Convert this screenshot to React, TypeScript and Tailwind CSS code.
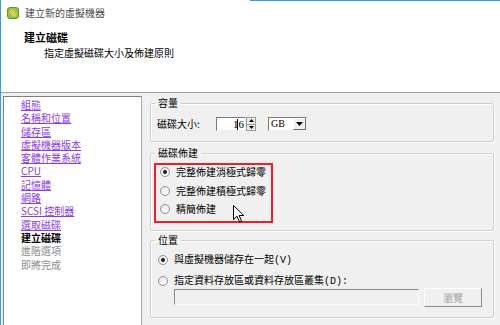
import React from "react";

function Radio({ checked }: { checked?: boolean }) {
  return (
    <span className="w-[10px] h-[10px] rounded-full border border-[#8f9090] bg-[linear-gradient(135deg,#e6e6e6,#ffffff)] flex items-center justify-center shrink-0">
      {checked && <span className="w-[4px] h-[4px] rounded-full bg-[#1c1c1c]" />}
    </span>
  );
}

function Icon() {
  return (
    <svg width="12" height="12" viewBox="0 0 12 12" className="shrink-0">
      <rect x="0.5" y="0.5" width="11" height="11" rx="2.5" fill="#8cc63f" stroke="#5a9a25" />
      <rect x="2.5" y="2.5" width="7" height="7" rx="1.5" fill="#b5dd6a" />
      <path d="M3 8.5 L5.2 6.3 M6.8 5.7 L9 3.5" stroke="#f39a1d" strokeWidth="2.4" strokeLinecap="round" />
      <path d="M4.6 7.2 L7.4 4.8" stroke="#ffffff" strokeWidth="1" strokeLinecap="round" />
    </svg>
  );
}

export default function App() {
  const links = ["組態", "名稱和位置", "儲存區", "虛擬機器版本", "客體作業系統", "CPU", "記憶體", "網路", "SCSI 控制器", "選取磁碟"];
  return (
    <div className="relative w-[500px] h-[325px] overflow-hidden bg-[#f0f0f0] border-l border-[#3d9be3] flex flex-col font-['Noto_Sans_CJK_TC','Noto_Sans',sans-serif] text-[10px] text-black">
      <div className="flex h-px shrink-0">
        <div className="w-[249px] bg-white" />
        <div className="flex-1 bg-[#3d9be3]" />
      </div>
      <div className="bg-white h-[92px] shrink-0 border-b border-[#a0a0a0] flex flex-col">
        <div className="flex items-center h-[14px] mt-[5px] pl-[6px] gap-[6px]">
          <Icon />
          <span className="text-[10px] leading-[14px] text-[#4a4a4a]">建立新的虛擬機器</span>
        </div>
        <div className="mt-[10px] pl-[23px] leading-[14px] text-[11px] font-bold">建立磁碟</div>
        <div className="mt-[2px] pl-[43px] leading-[14px] text-[10px]">指定虛擬磁碟大小及佈建原則</div>
      </div>
      <div className="flex flex-1 pt-[3px] items-start">
        <div className="ml-[2px] w-[139px] h-[240px] shrink-0 bg-white border border-[#a8a8a8] border-t-[#828282] border-l-[#828282] pt-px pl-[17px] flex flex-col">
          {links.map((l) => (
            <div key={l} className="h-[13.3px] leading-[13.3px] text-[#8a3ce0] underline underline-offset-[1px] whitespace-nowrap">
              {l}
            </div>
          ))}
          <div className="h-[13.3px] leading-[13.3px] font-bold">建立磁碟</div>
          <div className="h-[13.3px] leading-[13.3px] text-[#8c8c8c]">進階選項</div>
          <div className="h-[13.3px] leading-[13.3px] text-[#8c8c8c]">即將完成</div>
        </div>
        <div className="ml-[8px] w-[344px] flex flex-col">
          <fieldset className="mt-px border border-[#cfcfcf] rounded-[2px] shadow-[inset_1px_1px_0_#fff,1px_1px_0_#fff] pb-[10px]">
            <legend className="ml-[4px] px-[3px] leading-[12px] text-[10px]">容量</legend>
            <div className="mt-[8px] flex items-center pl-[6px] h-[14px]">
              <span className="w-[59px] leading-[14px]">磁碟大小:</span>
              <div className="w-[30px] h-[14px] bg-white border border-[#f0f0f0] border-t-[#7a7a7a] border-l-[#7a7a7a] flex items-center justify-end pr-px">
                <span className="w-px h-[11px] bg-black -mr-[5px] relative" />
                <span className="leading-[12px] font-['Liberation_Serif',serif] text-[11px]">16</span>
              </div>
              <div className="w-[10px] h-[14px] flex flex-col border border-[#9a9a9a] bg-[#ececec]">
                <div className="flex-1 flex items-center justify-center border-b border-[#9a9a9a]">
                  <svg width="5" height="3" viewBox="0 0 5 3"><path d="M0 3 L2.5 0 L5 3Z" fill="#000" /></svg>
                </div>
                <div className="flex-1 flex items-center justify-center">
                  <svg width="5" height="3" viewBox="0 0 5 3"><path d="M0 0 L2.5 3 L5 0Z" fill="#000" /></svg>
                </div>
              </div>
              <div className="ml-[12px] w-[39px] h-[14px] bg-white border border-[#f0f0f0] border-t-[#7a7a7a] border-l-[#7a7a7a] flex items-center">
                <span className="pl-[2px] flex-1 leading-[12px] font-['Liberation_Serif',serif] text-[10px]">GB</span>
                <div className="w-[13px] h-[12px] bg-[#f0f0f0] border border-[#fff] border-r-[#6d6d6d] border-b-[#6d6d6d] flex items-center justify-center">
                  <svg width="7" height="4" viewBox="0 0 7 4"><path d="M0 0 L7 0 L3.5 4Z" fill="#000" /></svg>
                </div>
              </div>
            </div>
          </fieldset>

          <fieldset className="mt-[5px] border border-[#cfcfcf] rounded-[2px] shadow-[inset_1px_1px_0_#fff,1px_1px_0_#fff] pb-[7px]">
            <legend className="ml-[4px] px-[3px] leading-[12px] text-[10px]">磁碟佈建</legend>
            <div className="mt-[4px] ml-[3px] w-[119px] border-2 border-[#e8212b] pl-[4px] pb-[5px] flex flex-col gap-[4.5px]">
              <div className="flex items-center gap-[6px] h-[14px]"><Radio checked /><span className="leading-[14px]">完整佈建消極式歸零</span></div>
              <div className="flex items-center gap-[6px] h-[14px]"><Radio /><span className="leading-[14px]">完整佈建積極式歸零</span></div>
              <div className="flex items-center gap-[6px] h-[14px]"><Radio /><span className="leading-[14px]">精簡佈建</span></div>
            </div>
          </fieldset>

          <fieldset className="mt-[3px] border border-[#cfcfcf] rounded-[2px] shadow-[inset_1px_1px_0_#fff,1px_1px_0_#fff] pb-[10px]">
            <legend className="ml-[4px] px-[3px] leading-[12px] text-[10px]">位置</legend>
            <div className="mt-[7px] flex items-center gap-[6px] h-[14px] pl-[7px]">
              <Radio checked />
              <span className="leading-[14px]">與虛擬機器儲存在一起<span className="font-['Liberation_Mono',monospace]">(V)</span></span>
            </div>
            <div className="mt-[7px] flex items-center gap-[6px] h-[14px] pl-[7px]">
              <Radio />
              <span className="leading-[14px]">指定資料存放區或資料存放區叢集<span className="font-['Liberation_Mono',monospace]">(D):</span></span>
            </div>
            <div className="flex items-start pl-[23px]">
              <div className="mt-px w-[245px] h-[16px] bg-[#f0f0f0] border border-[#fafafa] border-t-[#8a8a8a] border-l-[#8a8a8a]" />
              <div className="ml-[5px] w-[58px] h-[19px] bg-[#f0f0f0] border border-[#fff] border-r-[#8a8a8a] border-b-[#8a8a8a] flex items-center justify-center text-[#a3a3a3] leading-[12px]">
                瀏覽
              </div>
            </div>
          </fieldset>
        </div>
      </div>
      <svg className="absolute left-[232px] top-[205px]" width="12" height="18" viewBox="0 0 12 18">
        <path d="M0.5 0.5 L0.5 14.5 L4 11.2 L6.6 17 L8.6 16.1 L6.1 10.5 L10.8 10.5 Z" fill="#fff" stroke="#000" strokeWidth="1" strokeLinejoin="round" />
      </svg>
    </div>
  );
}
